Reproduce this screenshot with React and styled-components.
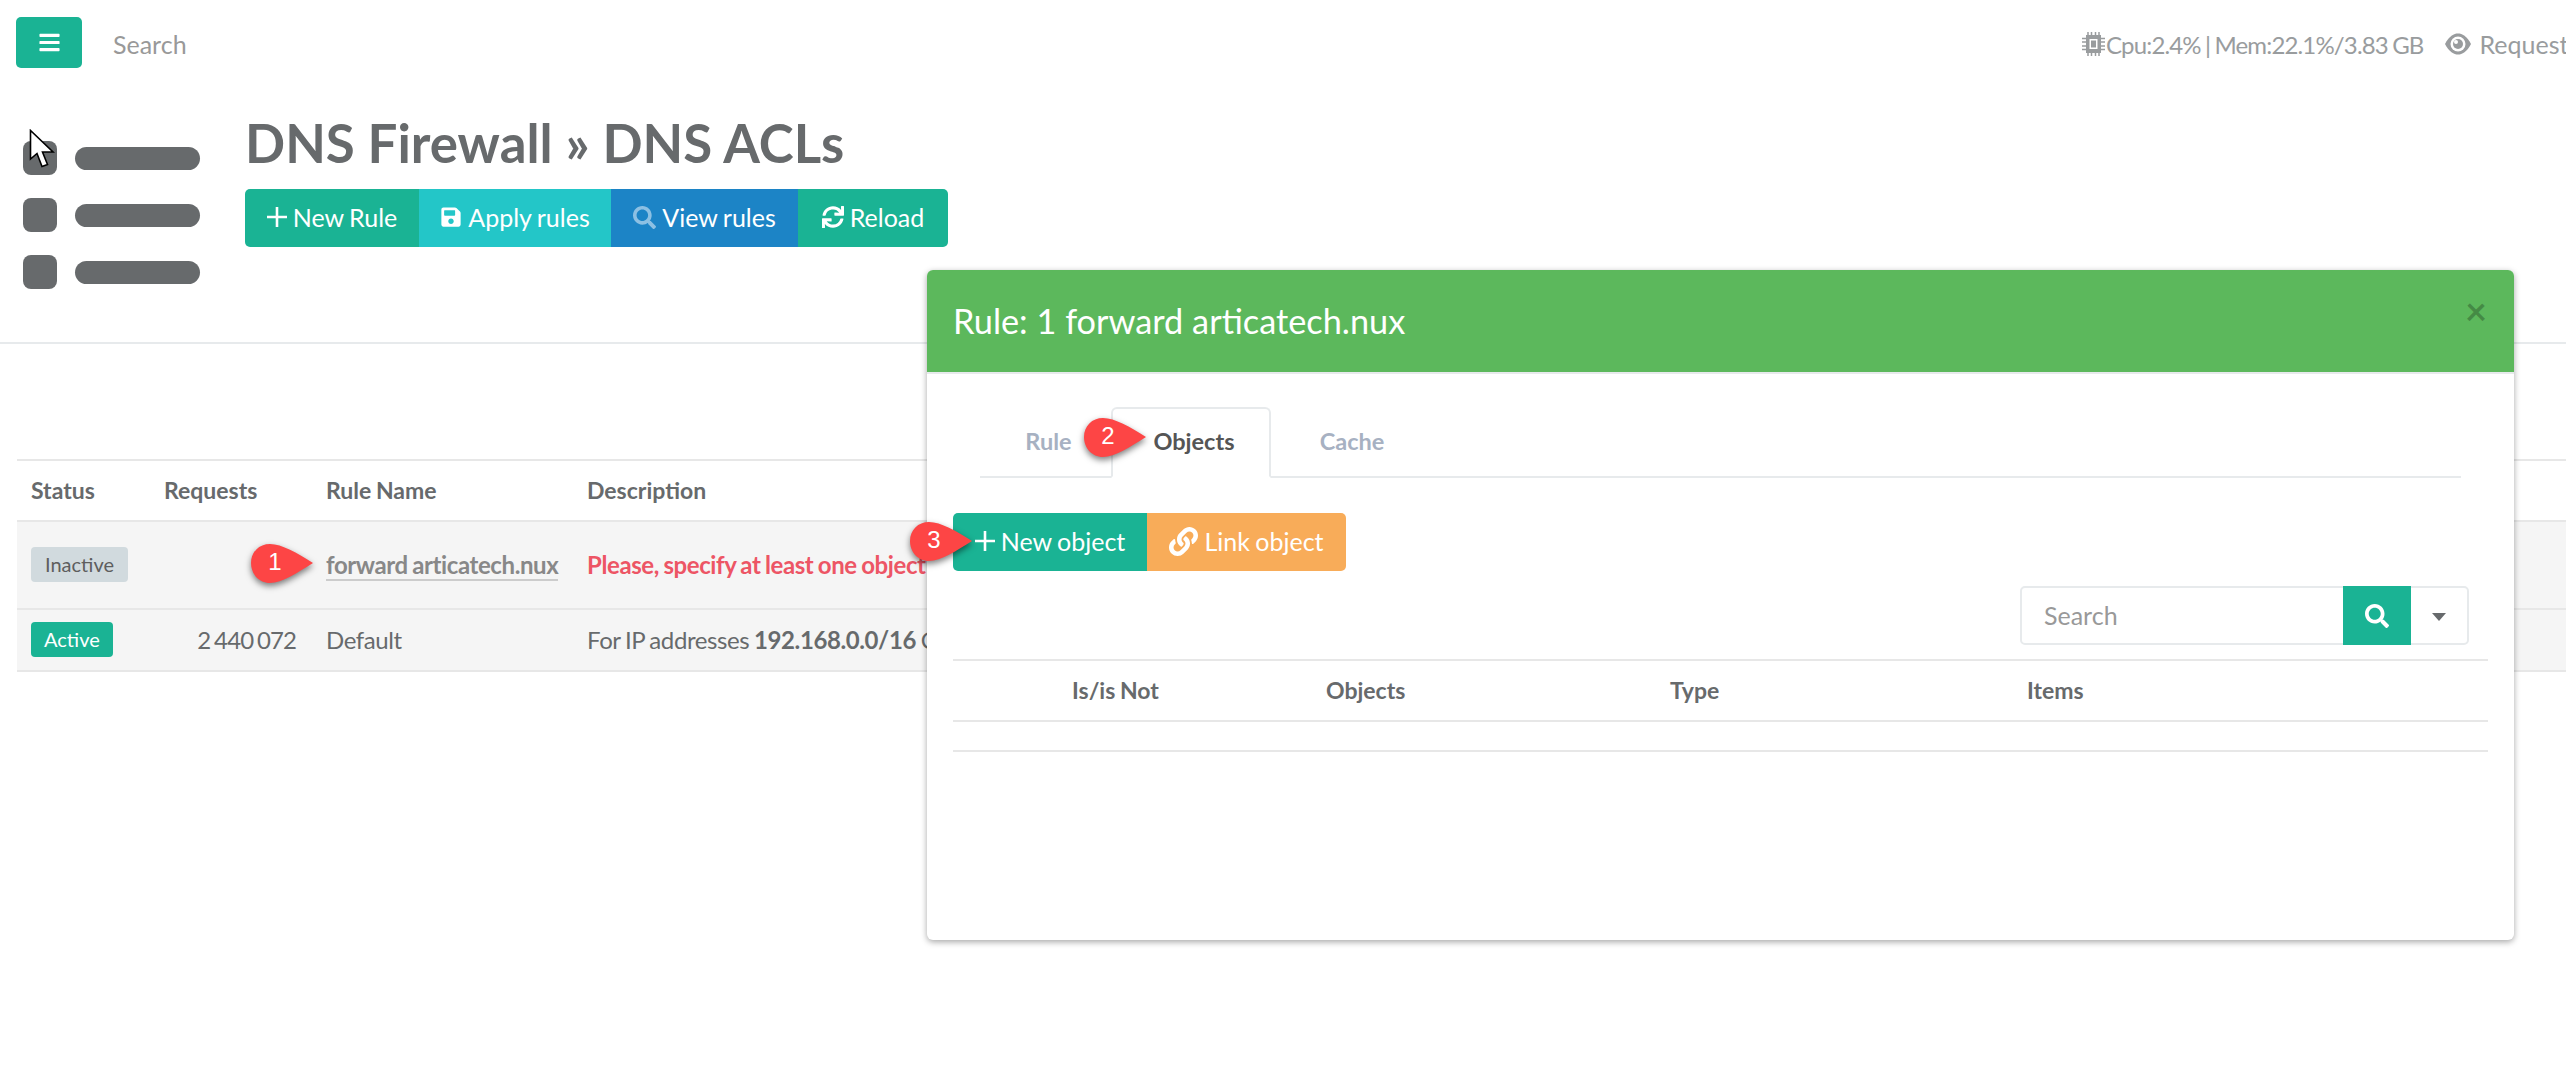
import React from "react";
import styled, { createGlobalStyle } from "styled-components";
import { FaBars, FaLink, FaSave, FaSearch, FaSync } from "react-icons/fa";

const GlobalStyle = createGlobalStyle`
  html, body {
    margin: 0;
    padding: 0;
    background: #fff;
  }
  body {
    font-family: Lato, "Open Sans", sans-serif;
    color: #676a6c;
    font-size: 24px;
  }
`;

const Page = styled.div`
  position: relative;
  width: 100%;
  height: 1083px;
  overflow: hidden;
  background: #fff;
`;

const TopBar = styled.header`
  display: flex;
  align-items: center;
  height: 86px;
  padding: 0 0 0 16px;
`;

const MenuButton = styled.div`
  display: flex;
  align-items: center;
  justify-content: center;
  width: 66px;
  height: 51px;
  margin-bottom: 1px;
  border-radius: 5px;
  background: #1ab394;
  color: #fff;
  font-size: 24px;
`;

const TopSearch = styled.div`
  margin-left: 31px;
  margin-top: 2px;
  color: #999;
  font-size: 25px;
`;

const Stats = styled.div`
  display: flex;
  align-items: center;
  margin-left: auto;
  margin-top: 2px;
  width: 484px;
  flex: none;
  overflow: hidden;
  white-space: nowrap;
  color: #999c9e;
  svg {
    flex: none;
  }
`;

const StatText = styled.span`
  margin-left: 1px;
  margin-right: 21px;
  font-size: 24px;
  letter-spacing: -0.85px;
  word-spacing: -1px;
`;

const RequestsText = styled.span`
  margin-left: 7px;
  font-size: 25px;
`;

const Hero = styled.section`
  display: flex;
  height: 256px;
  border-bottom: 2px solid #e7eaec;
`;

const Tools = styled.div`
  display: flex;
  flex-direction: column;
  gap: 23px;
  width: 245px;
  padding: 55px 0 0 23px;
  box-sizing: border-box;
`;

const ToolRow = styled.div`
  display: flex;
  align-items: center;
  gap: 18px;
`;

const ToolSquare = styled.div`
  width: 34px;
  height: 34px;
  border-radius: 8px;
  background: #676a6c;
`;

const ToolBar = styled.div`
  width: 125px;
  height: 23px;
  border-radius: 12px;
  background: #676a6c;
`;

const HeroMain = styled.div`
  padding-top: 26px;
`;

const Title = styled.h1`
  margin: 0;
  font-size: 52.8px;
  line-height: 62px;
  font-weight: 700;
  color: #676a6c;
`;

const BtnGroup = styled.div`
  display: inline-flex;
  border-radius: 5px;
  overflow: hidden;
  margin-top: ${(props) => props.$top || 0}px;
  vertical-align: top;
`;

const Btn = styled.div`
  display: flex;
  align-items: center;
  justify-content: center;
  gap: 6px;
  box-sizing: border-box;
  width: ${(props) => props.$w}px;
  height: 58px;
  padding-bottom: 2px;
  background: ${(props) => props.$bg};
  color: #fff;
  font-size: 25px;
  word-spacing: -1px;
  white-space: nowrap;
`;

const Table = styled.table`
  border-collapse: collapse;
  table-layout: fixed;
  width: ${(props) => props.$w};
  margin: ${(props) => props.$m};
`;

const Th = styled.th`
  height: 61px;
  padding: 0 0 1px ${(props) => props.$pl || 14}px;
  box-sizing: border-box;
  text-align: left;
  font-size: 23px;
  font-weight: 700;
  word-spacing: -1px;
  color: #676a6c;
  border-top: 2px solid #e7e7e7;
  border-bottom: 2px solid #e7e7e7;
  white-space: nowrap;
`;

const Tr = styled.tr`
  background: #f5f5f5;
`;

const Td = styled.td`
  padding: 0 ${(props) => props.$pr || 0}px 2px 14px;
  height: ${(props) => props.$h}px;
  box-sizing: border-box;
  text-align: ${(props) => props.$align || "left"};
  font-size: 24px;
  letter-spacing: -0.4px;
  word-spacing: -1px;
  color: #676a6c;
  border-bottom: 2px solid #e7e7e7;
  white-space: nowrap;
  overflow: hidden;
`;

const Count = styled.span`
  letter-spacing: -0.9px;
  word-spacing: -1.5px;
`;

const Label = styled.span`
  display: inline-block;
  padding: 0 ${(props) => props.$px}px;
  line-height: 35px;
  border-radius: 4px;
  font-size: 20px;
  letter-spacing: 0;
  font-weight: 400;
  background: ${(props) => (props.$active ? "#1ab394" : "#d1dade")};
  color: ${(props) => (props.$active ? "#fff" : "#5e5e5e")};
`;

const RuleLink = styled.span`
  color: #888;
  font-weight: 700;
  border-bottom: 2px solid #ccc;
`;

const Warn = styled.span`
  color: #ed5565;
  font-weight: 700;
`;

const Modal = styled.section`
  position: absolute;
  left: 927px;
  top: 270px;
  width: 1587px;
  height: 670px;
  background: #fff;
  border-radius: 6px;
  box-shadow: 0 2px 6px rgba(0, 0, 0, 0.35);
  overflow: hidden;
`;

const ModalHead = styled.div`
  display: flex;
  align-items: center;
  justify-content: space-between;
  box-sizing: border-box;
  height: 104px;
  padding: 0 27px 2px 26px;
  background: #5cb85c;
  border-bottom: 2px solid #e7eaec;
  color: #fff;
`;

const ModalTitle = styled.h4`
  margin: 0;
  font-size: 34.3px;
  font-weight: 400;
`;

const Close = styled.span`
  margin-top: -20px;
  font-size: 38px;
  font-weight: 700;
  line-height: 1;
  color: rgba(0, 0, 0, 0.25);
`;

const ModalBody = styled.div`
  padding: 33px 26px 0 26px;
`;

const Tabs = styled.div`
  display: flex;
  align-items: flex-start;
  height: 69px;
  margin: 0 27px 0 27px;
  border-bottom: 2px solid #e7eaec;
`;

const Tab = styled.div`
  display: flex;
  align-items: center;
  justify-content: center;
  box-sizing: border-box;
  width: ${(props) => props.$w}px;
  height: ${(props) => (props.$active ? 71 : 69)}px;
  padding: 0 0 ${(props) => (props.$active ? 3 : 1)}px ${(props) => props.$pl || 0}px;
  font-size: 23.5px;
  font-weight: 700;
  color: ${(props) => (props.$active ? "#555" : "#a7b1c2")};
  background: #fff;
  ${(props) =>
    props.$active &&
    `
    border: 2px solid #e7eaec;
    border-bottom-color: #fff;
    border-radius: 6px 6px 0 0;
  `}
`;

const SearchRow = styled.div`
  display: flex;
  justify-content: flex-end;
  margin: 15px 19px 14px 0;
`;

const SearchBox = styled.div`
  display: flex;
  align-items: center;
  box-sizing: border-box;
  width: 449px;
  height: 59px;
  border: 2px solid #e7eaec;
  border-radius: 5px;
`;

const SearchInput = styled.div`
  flex: 1;
  padding: 0 0 1px 22px;
  color: #999;
  font-size: 25px;
`;

const SearchBtn = styled.div`
  display: flex;
  align-items: center;
  justify-content: center;
  width: 68px;
  height: 59px;
  background: #1ab394;
  color: #fff;
`;

const Caret = styled.div`
  width: 0;
  height: 0;
  margin: 3px 21px 0 21px;
  border-left: 7px solid transparent;
  border-right: 7px solid transparent;
  border-top: 8px solid #676a6c;
`;

const Callout = styled.div`
  position: absolute;
  left: ${(props) => props.$x}px;
  top: ${(props) => props.$y}px;
  width: 64px;
  height: 42px;
  svg {
    display: block;
    filter: drop-shadow(0 3px 3px rgba(0, 0, 0, 0.5));
  }
`;

const CalloutNum = styled.span`
  position: absolute;
  left: 0;
  top: 0;
  width: 50px;
  line-height: 38px;
  text-align: center;
  color: #fff;
  font-family: "Liberation Sans", sans-serif;
  font-size: 24px;
`;

const Cursor = styled.svg`
  position: absolute;
  left: 29px;
  top: 129px;
`;

const Bubble = ({ x, y, n }) => (
  <Callout $x={x} $y={y}>
    <svg width="64" height="42" viewBox="0 0 64 42">
      <path d="M20 1C32 1 47 10 63 20C47 30 32 40 20 40C9 40 1 31 1 20C1 9 9 1 20 1Z" fill="#fd4545" />
    </svg>
    <CalloutNum>{n}</CalloutNum>
  </Callout>
);

const PlusIcon = () => (
  <svg width="20" height="20" viewBox="0 0 20 20">
    <path d="M10 0V20M0 10H20" stroke="#fff" strokeWidth="2.6" fill="none" />
  </svg>
);

const ChipIcon = () => (
  <svg width="23" height="24" viewBox="0 0 23 24" fill="#999c9e">
    <path d="M4 3H19V21H4ZM7.5 7V17H15.5V7Z" fillRule="evenodd" />
    <path d="M9 8.5H14V15.5H9Z" />
    <path
      d="M6 0V3M9.5 0V3M13.5 0V3M17 0V3M6 21V24M9.5 21V24M13.5 21V24M17 21V24M0 6.5H4M0 10H4M0 14H4M0 17.5H4M19 6.5H23M19 10H23M19 14H23M19 17.5H23"
      stroke="#999c9e"
      strokeWidth="1.5"
    />
  </svg>
);

const EyeIcon = () => (
  <svg width="28" height="22" viewBox="0 0 28 22">
    <path d="M1 11C5 3 10 0.5 14 0.5C18 0.5 23 3 27 11C23 19 18 21.5 14 21.5C10 21.5 5 19 1 11Z" fill="#999c9e" />
    <circle cx="14" cy="11" r="7.5" fill="#fff" />
    <circle cx="14" cy="11" r="5" fill="#999c9e" />
    <circle cx="12" cy="9" r="2" fill="#fff" />
  </svg>
);

const tools = [0, 1, 2];

const App = () => (
  <Page>
    <GlobalStyle />
    <TopBar>
      <MenuButton>
        <FaBars size={23} />
      </MenuButton>
      <TopSearch>Search</TopSearch>
      <Stats>
        <ChipIcon />
        <StatText>Cpu:2.4% | Mem:22.1%/3.83 GB</StatText>
        <EyeIcon />
        <RequestsText>Requests</RequestsText>
      </Stats>
    </TopBar>

    <Hero>
      <Tools>
        {tools.map((t) => (
          <ToolRow key={t}>
            <ToolSquare />
            <ToolBar />
          </ToolRow>
        ))}
      </Tools>
      <HeroMain>
        <Title>DNS Firewall » DNS ACLs</Title>
        <BtnGroup $top={15}>
          <Btn $w={174} $bg="#1ab394">
            <PlusIcon />
            New Rule
          </Btn>
          <Btn $w={192} $bg="#23c6c8">
            <FaSave size={22} />
            Apply rules
          </Btn>
          <Btn $w={187} $bg="#1c84c6">
            <FaSearch size={23} color="#8cc0e3" />
            View rules
          </Btn>
          <Btn $w={150} $bg="#1ab394">
            <FaSync size={22} />
            Reload
          </Btn>
        </BtnGroup>
      </HeroMain>
    </Hero>

    <Table $w="calc(100% - 17px)" $m="115px 0 0 17px">
      <colgroup>
        <col width="133" />
        <col width="162" />
        <col width="261" />
        <col />
      </colgroup>
      <thead>
        <tr>
          <Th>Status</Th>
          <Th>Requests</Th>
          <Th>Rule Name</Th>
          <Th>Description</Th>
        </tr>
      </thead>
      <tbody>
        <Tr>
          <Td $h={88}>
            <Label $px={14}>Inactive</Label>
          </Td>
          <Td $h={88} />
          <Td $h={88}>
            <RuleLink>forward articatech.nux</RuleLink>
          </Td>
          <Td $h={88}>
            <Warn>Please, specify at least one object</Warn>
          </Td>
        </Tr>
        <Tr>
          <Td $h={62}>
            <Label $active $px={13}>
              Active
            </Label>
          </Td>
          <Td $h={62} $align="right" $pr={16}>
            <Count>2 440 072</Count>
          </Td>
          <Td $h={62}>Default</Td>
          <Td $h={62}>
            For IP addresses <b>192.168.0.0/16</b> O
          </Td>
        </Tr>
      </tbody>
    </Table>

    <Modal>
      <ModalHead>
        <ModalTitle>Rule: 1 forward articatech.nux</ModalTitle>
        <Close>×</Close>
      </ModalHead>
      <ModalBody>
        <Tabs>
          <Tab $w={131} $pl={6}>
            Rule
          </Tab>
          <Tab $w={160} $pl={6} $active>
            Objects
          </Tab>
          <Tab $w={162}>Cache</Tab>
        </Tabs>
        <BtnGroup $top={35}>
          <Btn $w={194} $bg="#1ab394">
            <PlusIcon />
            New object
          </Btn>
          <Btn $w={199} $bg="#f8ac59">
            <FaLink size={29} />
            Link object
          </Btn>
        </BtnGroup>
        <SearchRow>
          <SearchBox>
            <SearchInput>Search</SearchInput>
            <SearchBtn>
              <FaSearch size={24} />
            </SearchBtn>
            <Caret />
          </SearchBox>
        </SearchRow>
        <Table $w="100%" $m="0">
          <colgroup>
            <col width="359" />
            <col width="344" />
            <col width="357" />
            <col />
          </colgroup>
          <thead>
            <tr>
              <Th $pl={119}>Is/is Not</Th>
              <Th>Objects</Th>
              <Th>Type</Th>
              <Th>Items</Th>
            </tr>
          </thead>
          <tbody>
            <tr>
              <Td $h={30} colSpan={4} />
            </tr>
          </tbody>
        </Table>
      </ModalBody>
    </Modal>

    <Bubble x={250} y={543} n={1} />
    <Bubble x={1083} y={417} n={2} />
    <Bubble x={909} y={521} n={3} />

    <Cursor width="28" height="40" viewBox="0 0 28 40">
      <path d="M1.5 1.5V30L8 24.5L13 37.5L18.5 35.5L13.5 23H24Z" fill="#fff" stroke="#000" strokeWidth="1.6" />
    </Cursor>
  </Page>
);

export default App;
